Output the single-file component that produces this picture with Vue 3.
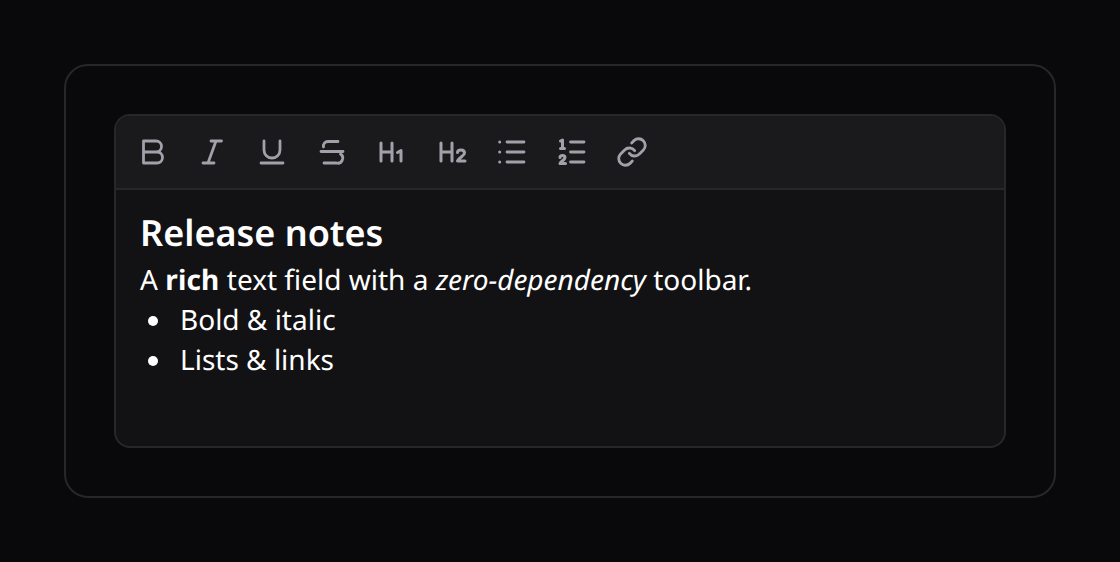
<script setup>
</script>

<template>
  <div class="page">
    <section class="frame">
      <div class="editor">
        <div class="toolbar">
          <button class="tool" aria-label="Bold">
            <svg viewBox="0 0 32 32"><path d="M7.5 16H20A5.5 5.5 0 0 0 20 5H7.5V27H21A5.5 5.5 0 0 0 21 16" /></svg>
          </button>
          <button class="tool" aria-label="Italic">
            <svg viewBox="0 0 32 32"><path d="M15 5H25.5M7 27H18M20 5L12 27" /></svg>
          </button>
          <button class="tool" aria-label="Underline">
            <svg viewBox="0 0 32 32"><path d="M8 5V14A8 8 0 0 0 24 14V5M5 27H27" /></svg>
          </button>
          <button class="tool" aria-label="Strikethrough">
            <svg viewBox="0 0 32 32"><path d="M22 5.5H12A4.5 4.5 0 0 0 7.5 11M5 15.5H27M24.5 18A5 5 0 0 1 20.5 27H8" /></svg>
          </button>
          <button class="tool" aria-label="Heading 1">
            <svg viewBox="0 0 32 32"><path class="h" d="M5 7V25M16 7V25M5 16H16" /><path class="num" d="M21.5 16.5L25 14.5V25" /></svg>
          </button>
          <button class="tool" aria-label="Heading 2">
            <svg viewBox="0 0 32 32"><path class="h" d="M5 7V25M16 7V25M5 16H16" /><path class="num" d="M21.5 16.5C21.5 15 23 14 25 14S28.5 15 28.5 17C28.5 20 23.5 21 21.5 25H29" /></svg>
          </button>
          <button class="tool" aria-label="Bullet list">
            <svg viewBox="0 0 32 32"><path d="M11 6H28M11 16H28M11 26H28" /><circle cx="3.7" cy="6" r="1.5" /><circle cx="3.7" cy="16" r="1.5" /><circle cx="3.7" cy="26" r="1.5" /></svg>
          </button>
          <button class="tool" aria-label="Numbered list">
            <svg viewBox="0 0 32 32"><path d="M14.5 6H28M14.5 16H28M14.5 26H28" /><path class="num" d="M4.5 5L6.5 4V12.5M4.5 12.5H8.5M4 21.5C4 20 5 19.5 6.5 19.5S9 20 9 21.5C9 24 5 25 4 27.5H9.5" /></svg>
          </button>
          <button class="tool" aria-label="Link">
            <svg viewBox="0 0 24 24" class="link"><path d="M10 13a5 5 0 0 0 7.54.54l3-3a5 5 0 0 0-7.07-7.07l-1.72 1.71" /><path d="M14 11a5 5 0 0 0-7.54-.54l-3 3a5 5 0 0 0 7.07 7.07l1.71-1.71" /></svg>
          </button>
        </div>
        <div class="content">
          <h2>Release notes</h2>
          <p>A <strong>rich</strong> text field with a <em>zero-dependency</em> toolbar.</p>
          <ul>
            <li>Bold &amp; italic</li>
            <li>Lists &amp; links</li>
          </ul>
        </div>
      </div>
    </section>
  </div>
</template>

<style scoped>
.page {
  box-sizing: border-box;
  height: 562px;
  padding: 64px;
  background: #09090b;
  font-family: "Noto Sans", sans-serif;
  text-rendering: geometricPrecision;
}
.frame {
  box-sizing: border-box;
  height: 434px;
  padding: 48px;
  border: 2px solid #27272a;
  border-radius: 24px;
}
.editor {
  box-sizing: border-box;
  height: 334px;
  border: 2px solid #27272a;
  border-radius: 16px;
  background: #121214;
  overflow: hidden;
}
.toolbar {
  display: flex;
  align-items: center;
  gap: 16px;
  height: 72px;
  padding: 0 14px;
  background: #1a1a1c;
  border-bottom: 2px solid #27272a;
}
.tool {
  display: flex;
  align-items: center;
  justify-content: center;
  width: 44px;
  height: 44px;
  padding: 0;
  border: 0;
  background: none;
}
.tool svg {
  width: 32px;
  height: 32px;
  fill: none;
  stroke: #a1a1aa;
  stroke-width: 2.8;
  stroke-linecap: round;
  stroke-linejoin: round;
}
.tool svg circle {
  fill: #a1a1aa;
  stroke: none;
}
.tool svg .num {
  stroke-width: 3;
}
.tool svg .h {
  stroke-width: 3;
}
.tool svg.link {
  stroke-width: 2.1;
}
.content {
  padding: 23px 24px;
  color: #fff;
  font-size: 28px;
  line-height: 40px;
}
h2 {
  margin: 0 0 7px;
  font-size: 36px;
  line-height: 40px;
  font-weight: 600;
}
p {
  margin: 0;
}
strong {
  letter-spacing: 0.2px;
}
ul {
  margin: 0;
  padding-left: 40px;
  list-style: none;
}
li {
  position: relative;
}
li::before {
  content: "";
  position: absolute;
  left: -32.5px;
  top: 16px;
  width: 10px;
  height: 10px;
  border-radius: 50%;
  background: #fff;
}
</style>
